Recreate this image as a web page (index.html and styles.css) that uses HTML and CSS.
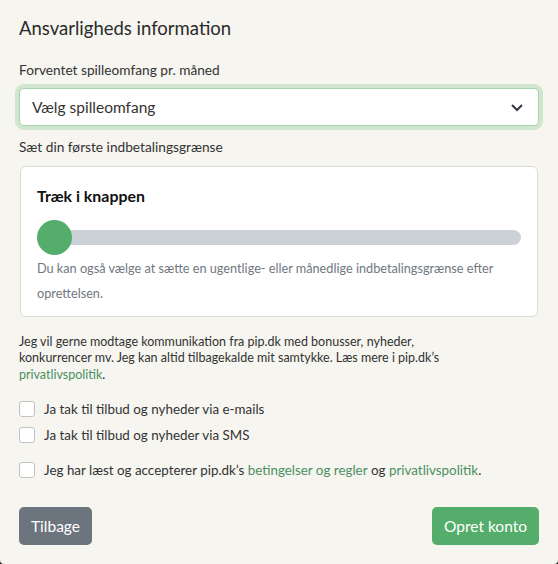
FILE: index.html
```html
<!DOCTYPE html>
<html lang="da">
<head>
<meta charset="utf-8">
<title>Ansvarligheds information</title>
<link rel="stylesheet" href="styles.css">
</head>
<body>
<div class="modal">
  <h1 class="title">Ansvarligheds information</h1>

  <label class="label">Forventet spilleomfang pr. måned</label>
  <div class="select">
    <span>Vælg spilleomfang</span>
    <svg class="chev" width="14" height="9" viewBox="0 0 14 9"><path d="M2 2 L7 7 L12 2" fill="none" stroke="#343a40" stroke-width="2"/></svg>
  </div>

  <label class="label label2">Sæt din første indbetalingsgrænse</label>
  <div class="card">
    <div class="card-title">Træk i knappen</div>
    <div class="slider">
      <div class="track"></div>
      <div class="thumb"></div>
    </div>
    <p class="help">Du kan også vælge at sætte en ugentlige- eller månedlige indbetalingsgrænse efter oprettelsen.</p>
  </div>

  <p class="consent">Jeg vil gerne modtage kommunikation fra pip.dk med bonusser, nyheder, konkurrencer mv. Jeg kan altid tilbagekalde mit samtykke. Læs mere i pip.dk’s <a>privatlivspolitik</a>.</p>

  <div class="checks">
    <div class="check"><span class="box"></span>Ja tak til tilbud og nyheder via e-mails</div>
    <div class="check"><span class="box"></span>Ja tak til tilbud og nyheder via SMS</div>
  </div>
  <div class="check terms"><span class="box"></span>Jeg har læst og accepterer pip.dk’s&nbsp;<a>betingelser og regler</a>&nbsp;og&nbsp;<a>privatlivspolitik</a>.</div>

  <div class="actions">
    <button class="btn btn-back">Tilbage</button>
    <button class="btn btn-create">Opret konto</button>
  </div>
</div>
</body>
</html>
```
FILE: styles.css
```css
html, body {
  margin: 0;
  padding: 0;
  background: #1e1e1e;
}
body {
  font-family: Lato, "Noto Sans", sans-serif;
  color: #343434;
}
.modal {
  width: 558px;
  height: 564px;
  box-sizing: border-box;
  background: #f6f5ef;
  border-radius: 0 0 4px 4px;
  padding: 14px 19px 0 19px;
}
.title {
  margin: 0;
  font-size: 18.5px;
  font-weight: 400;
  line-height: 28px;
  color: #2b2b2b;
}
.label {
  display: block;
  margin-top: 18px;
  font-size: 13.7px;
  line-height: 20px;
  color: #333;
}
.label2 { margin-top: 11px; }
.select {
  margin-top: 8px;
  height: 38px;
  box-sizing: border-box;
  background: #fff;
  border: 1px solid #a8d3b2;
  border-radius: 5px;
  box-shadow: 0 0 0 4px #d0e6cf;
  display: flex;
  align-items: center;
  justify-content: space-between;
  padding: 0 14px 0 12px;
  font-size: 15.5px;
  color: #333;
}
.chev { display: block; }
.card {
  margin: 9px 1px 0 1px;
  background: #fff;
  border: 1px solid #d9d9d6;
  border-radius: 6px;
  padding: 18px 16px 10px 16px;
}
.card-title {
  font-size: 15.9px;
  font-weight: 700;
  line-height: 22px;
  color: #111;
}
.slider {
  position: relative;
  margin-top: 13px;
  height: 35px;
  display: flex;
  align-items: center;
}
.track {
  flex: 1;
  height: 15px;
  margin-left: 17px;
  background: #ccd1d8;
  border-radius: 8px;
}
.thumb {
  position: absolute;
  left: 0;
  top: 0;
  width: 35px;
  height: 35px;
  border-radius: 50%;
  background: #55ad6b;
}
.help {
  margin: 1px 0 0 0;
  font-size: 12.7px;
  line-height: 25px;
  color: #6f7780;
}
.consent {
  margin: 17px 0 0 0;
  max-width: 440px;
  font-size: 12.5px;
  line-height: 16.3px;
  color: #333;
}
a { color: #4b8f62; }
.checks { margin-top: 18px; display: flex; flex-direction: column; gap: 10px; }
.check {
  display: flex;
  align-items: center;
  font-size: 13.4px;
  line-height: 16px;
  color: #333;
}
.box {
  width: 14px;
  height: 14px;
  border: 1px solid #c2c2c2;
  border-radius: 3px;
  background: #fff;
  margin-right: 9px;
  flex: none;
}
.terms { margin-top: 19px; }
.actions {
  margin-top: 29px;
  display: flex;
  justify-content: space-between;
}
.btn {
  font-family: inherit;
  font-size: 15.5px;
  color: #fff;
  border: none;
  border-radius: 5px;
  height: 38px;
  padding: 0 12px;
}
.btn-back { background: #6c757d; }
.btn-create { background: #55ad6b; }
```
